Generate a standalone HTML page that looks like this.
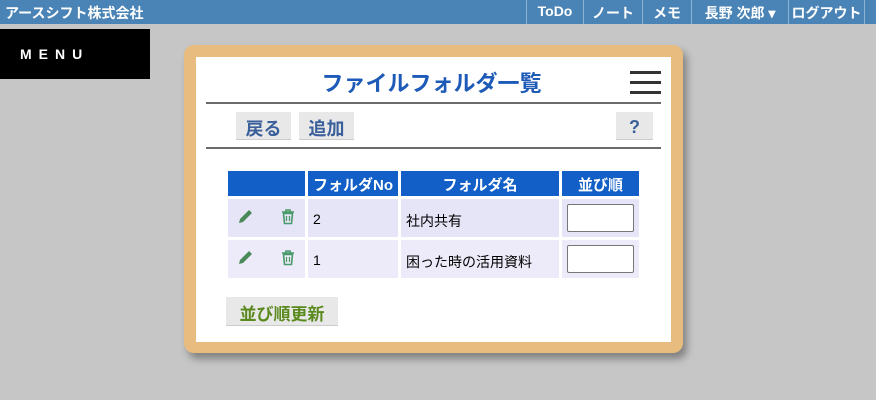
<!DOCTYPE html>
<html><head><meta charset="utf-8"><style>
*{margin:0;padding:0;box-sizing:border-box}
body{width:876px;height:400px;overflow:hidden;background:#c6c6c6;font-family:"Liberation Sans","Noto Sans CJK JP",sans-serif;position:relative}
.bar{position:absolute;left:0;top:0;width:876px;height:24px;background:#4a83b5;color:#fff;font-size:14px}
.bar .t{position:absolute;left:5px;top:3px;font-weight:bold}
.nav{position:absolute;top:0;height:24px;border-left:1px solid #8fb3d3;padding-top:3px;text-align:center;font-weight:bold;font-size:14px}
.menu{position:absolute;left:0;top:29px;width:150px;height:50px;background:#000;color:#fff;font-weight:bold;font-size:14px;letter-spacing:7px;padding:17px 0 0 20px}
.card{position:absolute;left:184px;top:45px;width:499px;height:308px;background:#e8bc7f;border-radius:10px;box-shadow:4px 6px 8px rgba(0,0,0,.35)}
.inner{position:absolute;left:196px;top:57px;width:475px;height:285px;background:#fff}
.title{position:absolute;left:194px;width:475px;top:66px;text-align:center;color:#1e5bb8;font-size:22px;font-weight:bold}
.hb{position:absolute;left:630px;width:31px;height:3px;background:#333}
.hr{position:absolute;left:206px;width:455px;height:2px;background:#6b6b6b}
.btn{position:absolute;top:112px;height:28px;background:#e8e8e8;color:#3a5f9a;font-weight:bold;font-size:18px;text-align:center;padding-top:3px;border-bottom:1px solid #ccc}
.c{position:absolute}
.h{background:#1260c7;color:#fff;font-weight:bold;font-size:15px;text-align:center;padding-top:3px;top:171px;height:25px}
.r{font-size:14px;color:#000;padding:12px 0 0 5px}
.inp{position:absolute;left:567px;width:67px;height:28px;background:#fff;border:1px solid #777;border-radius:2px}
</style></head><body>
<div class="bar"><span class="t">アースシフト株式会社</span>
<div class="nav" style="left:526px;width:57px">ToDo</div>
<div class="nav" style="left:583px;width:59px">ノート</div>
<div class="nav" style="left:642px;width:49px">メモ</div>
<div class="nav" style="left:691px;width:97px">長野 次郎 ▾</div>
<div class="nav" style="left:788px;width:77px;border-right:1px solid #8fb3d3">ログアウト</div>
</div>
<div class="menu">MENU</div>
<div class="card"></div>
<div class="inner"></div>
<div class="title">ファイルフォルダ一覧</div>
<div class="hb" style="top:71px"></div><div class="hb" style="top:81px"></div><div class="hb" style="top:91px"></div>
<div class="hr" style="top:102px"></div>
<div class="btn" style="left:236px;width:55px">戻る</div>
<div class="btn" style="left:299px;width:55px">追加</div>
<div class="btn" style="left:616px;width:37px;padding-top:5px">?</div>
<div class="hr" style="top:147px"></div>
<div class="c h" style="left:228px;width:77px"></div>
<div class="c h" style="left:308px;width:90px">フォルダNo</div>
<div class="c h" style="left:401px;width:158px">フォルダ名</div>
<div class="c h" style="left:562px;width:77px">並び順</div>
<div class="c" style="left:228px;top:199px;width:411px;height:38px;background:#e6e4f7"></div>
<div class="c" style="left:228px;top:240px;width:411px;height:38px;background:#edebf9"></div>
<div class="c" style="left:305px;top:199px;width:3px;height:79px;background:#fff"></div>
<div class="c" style="left:398px;top:199px;width:3px;height:79px;background:#fff"></div>
<div class="c" style="left:559px;top:199px;width:3px;height:79px;background:#fff"></div>
<div class="c" style="left:228px;top:237px;width:411px;height:3px;background:#fff"></div>
<div class="c r" style="left:308px;top:199px">2</div>
<div class="c r" style="left:401px;top:199px">社内共有</div>
<div class="c r" style="left:308px;top:240px">1</div>
<div class="c r" style="left:401px;top:240px">困った時の活用資料</div>
<div class="inp" style="top:204px"></div><div class="inp" style="top:245px"></div>
<svg class="c" style="left:237px;top:207px" width="18" height="18" viewBox="0 0 18 18"><path d="M2 16l1-4 9-9 3 3-9 9z" fill="#4a8a5a"/></svg>
<svg class="c" style="left:237px;top:248px" width="18" height="18" viewBox="0 0 18 18"><path d="M2 16l1-4 9-9 3 3-9 9z" fill="#4a8a5a"/></svg>
<svg class="c" style="left:281px;top:209px" width="14" height="16" viewBox="0 0 14 16"><path d="M1 3h12M5 3V1h4v2M2.5 4.5h9l-1 10h-7z" fill="none" stroke="#4a9a6a" stroke-width="1.6"/><path d="M5.5 7v5M8.5 7v5" stroke="#4a9a6a" stroke-width="1.3"/></svg>
<svg class="c" style="left:281px;top:250px" width="14" height="16" viewBox="0 0 14 16"><path d="M1 3h12M5 3V1h4v2M2.5 4.5h9l-1 10h-7z" fill="none" stroke="#4a9a6a" stroke-width="1.6"/><path d="M5.5 7v5M8.5 7v5" stroke="#4a9a6a" stroke-width="1.3"/></svg>
<div class="btn" style="left:226px;top:297px;width:112px;height:29px;color:#5a8a1e;font-size:17px;padding-top:3px">並び順更新</div>
</body></html>
